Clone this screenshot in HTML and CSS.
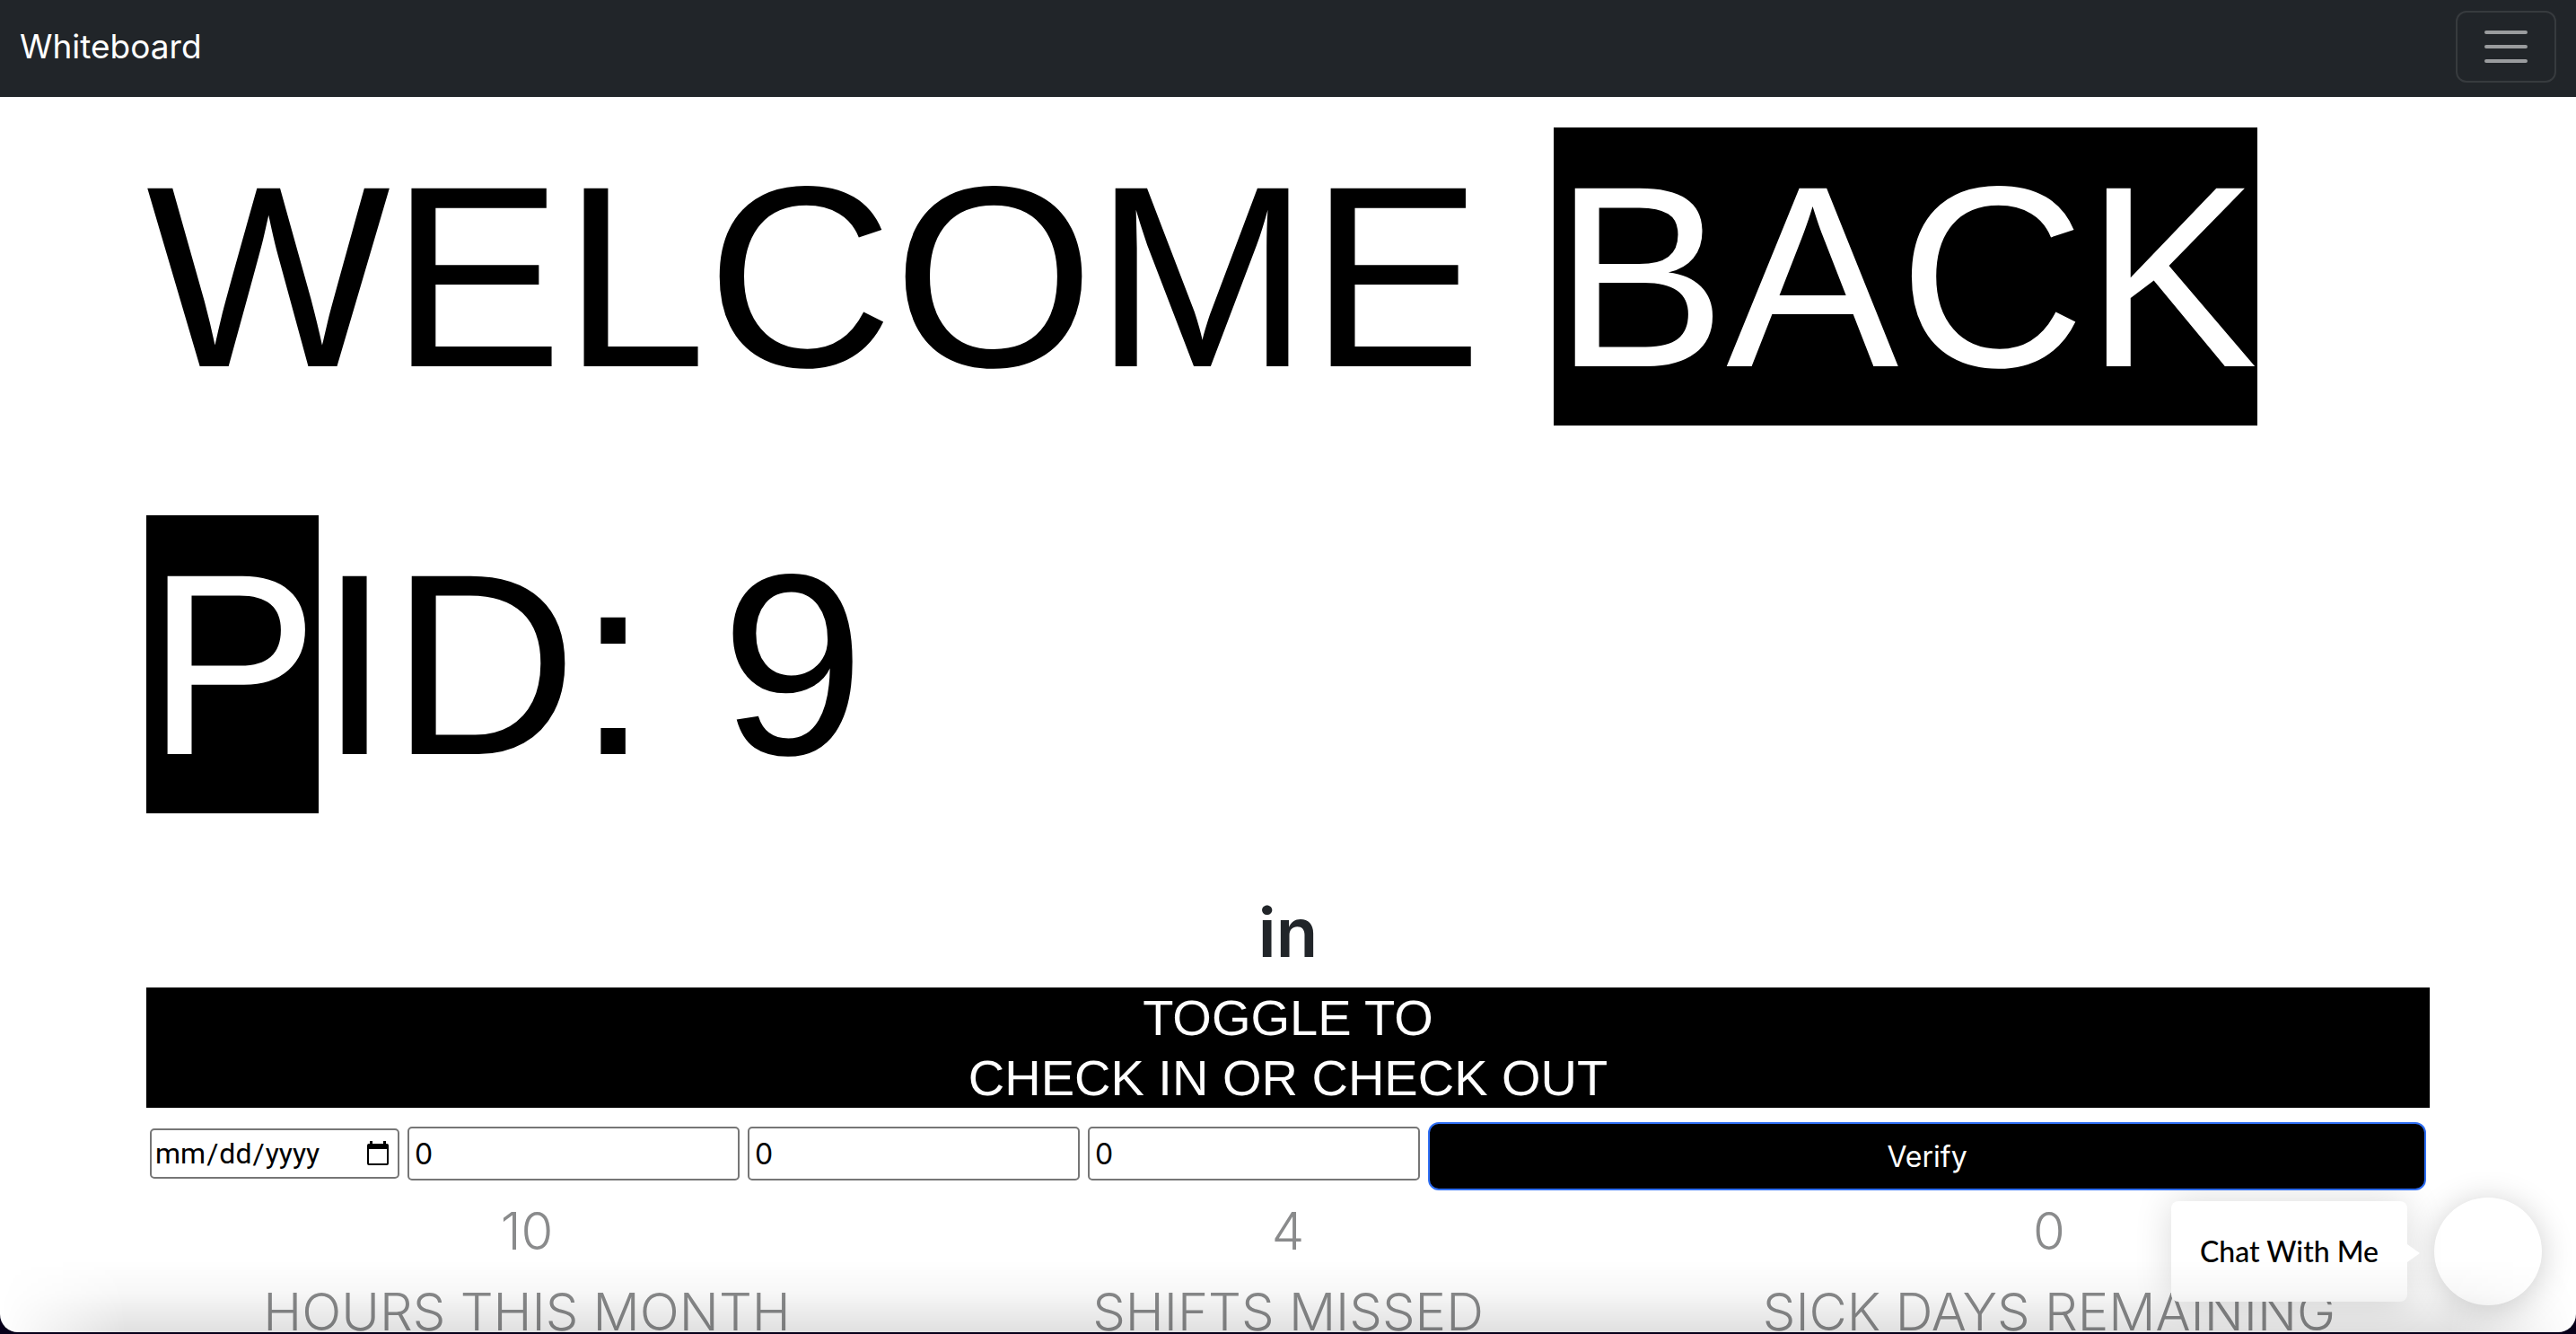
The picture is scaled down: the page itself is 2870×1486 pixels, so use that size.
FILE: index.html
```html
<!DOCTYPE html>
<html lang="en">
<head>
  <meta charset="utf-8">
  <meta name="viewport" content="width=device-width, initial-scale=1">
  <title>Whiteboard</title>
  <link rel="stylesheet" href="styles.css">
</head>
<body>
  <div class="window">
    <nav class="navbar">
      <a class="brand" href="#">Whiteboard</a>
      <button class="nav-toggle" type="button" aria-label="Toggle navigation">
        <svg class="nav-toggle-icon" viewBox="0 0 60 60" aria-hidden="true">
          <path d="M8 14h44M8 30h44M8 46h44" stroke="currentColor" stroke-width="4" stroke-linecap="round"/>
        </svg>
      </button>
    </nav>

    <main class="container">
      <h1 class="welcome">WELCOME <mark>BACK P</mark>ID: 9</h1>
      <h2 class="status">in</h2>
      <button class="toggle" type="button">TOGGLE TO<br>CHECK IN OR CHECK OUT</button>

      <form class="entry">
        <div class="fields">
          <input class="date" type="date" aria-label="Date">
          <input class="number" type="text" inputmode="numeric" value="0" aria-label="Hours">
          <input class="number" type="text" inputmode="numeric" value="0" aria-label="Shifts missed">
          <input class="number" type="text" inputmode="numeric" value="0" aria-label="Sick days">
        </div>
        <button class="verify" type="button">Verify</button>
      </form>

      <section class="stats">
        <div class="stat"><div>10</div><div>HOURS THIS MONTH</div></div>
        <div class="stat"><div>4</div><div>SHIFTS MISSED</div></div>
        <div class="stat"><div>0</div><div>SICK DAYS REMAINING</div></div>
      </section>
    </main>

    <div class="chat">
      <div class="chat-label">Chat With Me</div>
      <button class="chat-button" type="button" aria-label="Open chat"></button>
    </div>
  </div>
</body>
</html>
```
FILE: styles.css
```css
* {
  box-sizing: border-box;
}

body {
  margin: 0;
  background: #07001a;
  font-family: Inter, "Liberation Sans", sans-serif;
  color: #212529;
}

button,
input {
  font: inherit;
}

.window {
  position: relative;
  height: calc(100vh - 2px);
  overflow: hidden;
  background: #fff;
  border-radius: 0 0 20px 20px;
}

/* Soft shade along the bottom edge, fading out at both sides */
.window::after {
  content: "";
  position: absolute;
  inset: auto 0 0;
  height: 80px;
  background: linear-gradient(rgba(0, 0, 0, 0), rgba(0, 0, 0, 0.03) 45%, rgba(0, 0, 0, 0.12));
  mask-image: linear-gradient(to right, transparent, #000 140px, #000 calc(100% - 140px), transparent);
  pointer-events: none;
}

.navbar {
  display: flex;
  align-items: center;
  justify-content: space-between;
  padding: 12px 22px 16px;
  background: #212529;
}

.brand {
  font-size: 37px;
  line-height: 60px;
  color: #fff;
  text-decoration: none;
}

.nav-toggle {
  display: flex;
  align-items: center;
  justify-content: center;
  width: 112px;
  height: 80px;
  padding: 0;
  color: rgba(255, 255, 255, 0.55);
  background: none;
  border: 2px solid rgba(255, 255, 255, 0.1);
  border-radius: 12px;
}

.nav-toggle-icon {
  width: 60px;
  height: 60px;
}

.container {
  max-width: 2640px;
  margin: 0 auto;
  padding: 0 48px;
}

.welcome {
  margin: -16px 0 34px;
  font-family: "Liberation Sans", Arial, sans-serif;
  font-size: 288px;
  font-weight: 400;
  line-height: 432px;
  color: #000;
}

.welcome mark {
  padding: 5px 0;
  color: #fff;
  background: #000;
}

.status {
  margin: 0 0 14px;
  font-size: 76px;
  font-weight: 600;
  line-height: 96px;
  text-align: center;
}

.toggle {
  display: block;
  width: 100%;
  padding: 0;
  font-family: "Liberation Sans", Arial, sans-serif;
  font-size: 56px;
  line-height: 67px;
  color: #fff;
  background: #000;
  border: 0;
}

.entry {
  display: flex;
  gap: 9px;
  margin-top: 16px;
  padding: 0 4px;
  font-size: 32px;
}

.fields {
  display: flex;
  gap: 9px;
  align-items: center;
  padding-bottom: 6px;
}

.date,
.number {
  color: #000;
  background: #fff;
  border: 2px solid #767676;
  border-radius: 5px;
}

.date {
  width: 278px;
  height: 56px;
  padding: 0 8px 0 3px;
  font-family: Roboto, sans-serif;
}

.date::-webkit-calendar-picker-indicator {
  width: 28px;
  height: 28px;
  margin: 0;
  padding: 0;
  background: url("data:image/svg+xml,%3Csvg xmlns='http://www.w3.org/2000/svg' viewBox='0 0 28 28'%3E%3Cpath d='M5 0h3v3h12V0h3v3h1q2 0 2 2v20q0 2-2 2H4q-2 0-2-2V5q0-2 2-2h1zM4 9v16h20V9z' fill-rule='evenodd'/%3E%3C/svg%3E") center / contain no-repeat;
}

.number {
  width: 370px;
  height: 60px;
  padding: 0 6px;
}

.verify {
  flex: 1;
  height: 76px;
  padding: 0;
  color: #fff;
  background: #000;
  border: 2px solid #2f6ff5;
  border-radius: 12px;
}

.stats {
  display: grid;
  grid-template-columns: repeat(3, 1fr);
  font-size: 58px;
  font-weight: 300;
  line-height: 90px;
  text-align: center;
  white-space: nowrap;
  color: #8a8b8c;
}

.chat {
  position: absolute;
  right: 38px;
  bottom: 30px;
  display: flex;
  gap: 30px;
  align-items: center;
  font-family: Lato, sans-serif;
  font-size: 32px;
  font-weight: 500;
  line-height: 48px;
  color: #000;
}

.chat-label {
  position: relative;
  padding: 32px;
  background: #fff;
  border-radius: 8px;
  box-shadow: 0 0 40px rgba(0, 0, 0, 0.15);
}

.chat-label::after {
  content: "";
  position: absolute;
  top: 48px;
  left: 100%;
  border: solid transparent;
  border-width: 10px 0 10px 14px;
  border-left-color: #fff;
}

.chat-button {
  width: 120px;
  height: 120px;
  background: #fff;
  border: 0;
  border-radius: 50%;
  box-shadow: 0 4px 36px rgba(0, 0, 0, 0.2);
}
```
